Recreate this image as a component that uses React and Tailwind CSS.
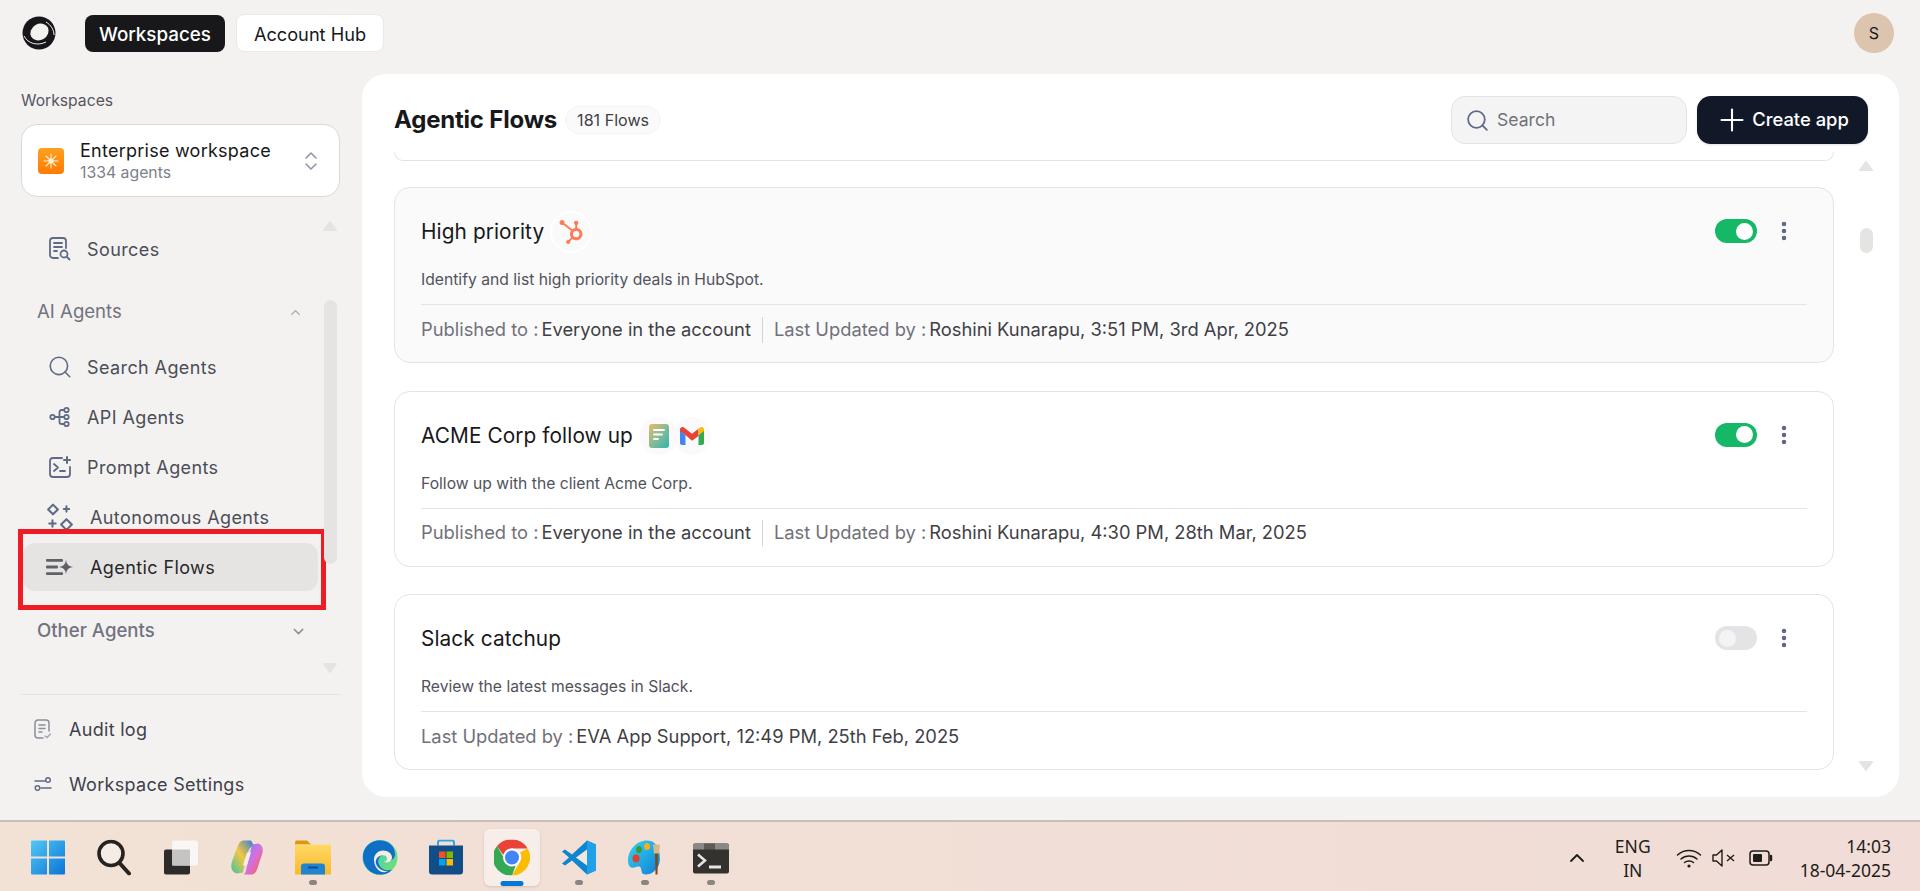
import { ChevronDown, ChevronUp, ChevronsUpDown, EllipsisVertical, Plus, Search } from "lucide-react";
import { SiHubspot } from "react-icons/si";

const inter = { fontFamily: "Inter, sans-serif" };

function Logo() {
  return (
    <svg width="34" height="34" viewBox="0 0 34 34">
      <circle cx="17" cy="17" r="16.5" fill="#17171a" />
      <ellipse cx="17.5" cy="16" rx="9.5" ry="8" fill="#f3f2f1" transform="rotate(-30 17.5 16)" />
      <path d="M2 20c4 8 14 10 22 6" fill="none" stroke="#f3f2f1" strokeWidth="1" />
      <path d="M24 6c5 3 8 8 8 13" fill="none" stroke="#f3f2f1" strokeWidth="1" />
    </svg>
  );
}

function SourcesIcon() {
  return (
    <svg className="shrink-0" width="22" height="24" viewBox="0 0 22 24" fill="none" stroke="#5f6b85" strokeWidth="1.8" strokeLinecap="round">
      <path d="M9 21H4a3 3 0 0 1-3-3V4a3 3 0 0 1 3-3h10a3 3 0 0 1 3 3v7" />
      <path d="M5 6h8M5 10h8M5 14h3" />
      <circle cx="15" cy="17" r="3.5" />
      <path d="m18 20 2.5 2.5" />
    </svg>
  );
}

function ApiIcon() {
  return (
    <svg className="shrink-0" width="22" height="22" viewBox="0 0 22 22" fill="none" stroke="#5f6b85" strokeWidth="1.8">
      <circle cx="3.5" cy="11" r="2.2" />
      <circle cx="17.5" cy="4" r="2.2" />
      <circle cx="17.5" cy="11" r="2.2" />
      <circle cx="17.5" cy="18" r="2.2" />
      <path d="M6 11h9M15 4h-2.5a2 2 0 0 0-2 2v10a2 2 0 0 0 2 2H15" />
    </svg>
  );
}

function PromptIcon() {
  return (
    <svg className="shrink-0" width="22" height="22" viewBox="0 0 22 22" fill="none" stroke="#5f6b85" strokeWidth="1.8" strokeLinecap="round" strokeLinejoin="round">
      <path d="M13 2H4a3 3 0 0 0-3 3v13a3 3 0 0 0 3 3h14a3 3 0 0 0 3-3v-7" />
      <path d="m5 8 4 3.5L5 15M11 15h5" />
      <path d="M18 1v6M15 4h6" strokeWidth="2" />
    </svg>
  );
}

function AutonomousIcon() {
  return (
    <svg className="shrink-0" width="28" height="28" viewBox="0 0 26 26" fill="none" stroke="#5f6b85" strokeWidth="1.9" strokeLinecap="round" strokeLinejoin="round">
      <path d="M6.5 1.500 11 6l-4.500 4.500L2 6zM19 15l5 5-5 5-5-5z" />
      <path d="M19 3v5M16.500 5.500h5M6 16v6M3 19h6" />
    </svg>
  );
}

function FlowsIcon() {
  return (
    <svg className="shrink-0" width="28" height="18" viewBox="0 0 28 18" fill="#5f6069">
      <rect x="0" y="1" width="17" height="2.800" rx="1" />
      <rect x="0" y="7.600" width="12" height="2.800" rx="1" />
      <rect x="0" y="14.200" width="17" height="2.800" rx="1" />
      <path d="M20 2c.7 4.600 2.600 6.300 7.500 7-4.900.7-6.800 2.400-7.500 7-.7-4.600-2.600-6.300-7.500-7 4.900-.7 6.800-2.400 7.500-7z" />
    </svg>
  );
}

function AuditIcon() {
  return (
    <svg width="18" height="20" viewBox="0 0 18 20" fill="none" stroke="#8b8e98" strokeWidth="1.500" strokeLinecap="round">
      <path d="M9 19H4a3 3 0 0 1-3-3V4a3 3 0 0 1 3-3h8a3 3 0 0 1 3 3v8" />
      <path d="M5 6h6M5 9.500h6M5 13h3" />
      <path d="m11 17 2 1.500 3.500-3.500" stroke="#a5a8b0" />
    </svg>
  );
}

function SettingsIcon() {
  return (
    <svg width="18" height="14" viewBox="0 0 18 14" fill="none" stroke="#5f6b85" strokeWidth="1.500" strokeLinecap="round">
      <path d="M1 4h10M7 11h10" />
      <circle cx="14" cy="3" r="2.300" />
      <circle cx="3.500" cy="11" r="2.300" />
    </svg>
  );
}

function NavItem({ icon, label, gap = "gap-[17px]", className = "" }) {
  return (
    <div className={`flex items-center pl-[27px] text-[18px] text-[#4b4d57] tracking-[0.4px] ${gap} ${className}`}>
      <span className="flex w-[20px] justify-center">{icon}</span>
      <span>{label}</span>
    </div>
  );
}

function FlowCard({ title, icons, description, published, updatedBy, active, on }) {
  return (
    <div className={`shrink-0 h-[176px] rounded-[16px] border border-[#e4e4e7] px-[26px] ${active ? "bg-[#fafafa]" : "bg-white"}`}>
      <div className="flex h-[79px] items-start pt-[23px]">
        <div className="flex h-[42px] items-center">
          <span className="text-[20.800px] text-[#18181b] tracking-[0.1px]">{title}</span>
          {icons}
        </div>
        <div className="ml-auto flex items-center pt-[8px]">
          <div className={`flex h-[24px] w-[42px] items-center rounded-full px-[4px] ${on ? "justify-end bg-[#14b866]" : "justify-start bg-[#e4e4e7]"}`}>
            <div className={`h-[17px] w-[17px] rounded-full ${on ? "bg-white" : "bg-[#f4f4f5]"}`} />
          </div>
          <EllipsisVertical size={24} color="#5f6480" strokeWidth={2.500} className="ml-[15px] mr-[11px]" />
        </div>
      </div>
      <p className="h-[26px] mb-[11px] text-[15.700px] leading-[26px] text-[#52525b]">{description}</p>
      <div className="flex h-[50px] items-center border-t border-[#e4e4e7] text-[18.330px]">
        {published && (
          <>
            <span className="text-[#71717a]">Published to :</span>
            <span className="ml-[3px] text-[#3f3f46]">{published}</span>
            <span className="mx-[11px] h-[26px] w-px bg-[#d4d4d8]" />
          </>
        )}
        <span className="text-[#71717a]">Last Updated by :</span>
        <span className="ml-[3px] text-[#3f3f46]">{updatedBy}</span>
      </div>
    </div>
  );
}

function HubspotBadge() {
  return (
    <span className="ml-[6px] flex h-[42px] w-[42px] items-center justify-center rounded-full border-2 border-white">
      <SiHubspot size={24} color="#ff7a59" />
    </span>
  );
}

function AcmeBadges() {
  return (
    <span className="ml-[7px] flex items-center">
      <span className="flex h-[38px] w-[38px] items-center justify-center rounded-full bg-[#fafafa]">
        <svg width="20" height="24" viewBox="0 0 20 24">
          <defs>
            <linearGradient id="doc" x1="0" y1="0" x2="1" y2="1">
              <stop offset="0" stopColor="#e8bb6d" />
              <stop offset="0.550" stopColor="#7dbb98" />
              <stop offset="1" stopColor="#2fb3ae" />
            </linearGradient>
          </defs>
          <rect width="20" height="24" rx="3" fill="url(#doc)" />
          <path d="M5 6h10M5 10.500h8M5 15h4" stroke="#fff" strokeWidth="1.800" strokeLinecap="round" />
        </svg>
      </span>
      <span className="-ml-[5px] flex h-[38px] w-[38px] items-center justify-center rounded-full bg-[#fafafa]">
        <svg width="24" height="18" viewBox="0 0 24 18">
          <path d="M0 3v13a2 2 0 0 0 2 2h3.500V8z" fill="#4285f4" />
          <path d="M24 3v13a2 2 0 0 1-2 2h-3.500V8z" fill="#34a853" />
          <path d="M5.500 8 0 4V2.500C0 .500 2.300-.600 3.900.600L5.500 1.800 12 6.700l6.500-4.900V9L12 13.800z" fill="#ea4335" />
          <path d="M18.500 1.800 20.100.600C21.700-.600 24 .500 24 2.500V4l-5.500 4z" fill="#fbbc04" />
        </svg>
      </span>
    </span>
  );
}

function ScrollArrow({ down }) {
  return (
    <svg width="16" height="12" viewBox="0 0 16 12" fill="#e4e4e3">
      <path d={down ? "M2 1h12a1 1 0 0 1 .800 1.600L8.800 10.500a1 1 0 0 1-1.600 0L1.200 2.600A1 1 0 0 1 2 1z" : "M2 11h12a1 1 0 0 0 .800-1.600L8.800 1.500a1 1 0 0 0-1.600 0L1.200 9.400A1 1 0 0 0 2 11z"} />
    </svg>
  );
}

function Sidebar() {
  return (
    <aside className="flex w-[362px] shrink-0 flex-col">
      <div className="pl-[21px] pr-[22px]">
        <div className="text-[15.700px] leading-[20px] text-[#55565f] h-[33px] mt-[17px]">Workspaces</div>
        <div className="flex h-[73px] items-center rounded-[16px] border border-[#d9d9dc] bg-white pl-[16px] pr-[16px]">
          <span className="flex h-[26px] w-[26px] items-center justify-center rounded-[4px] bg-gradient-to-b from-[#ffa01e] to-[#ff7a00]">
            <svg width="16" height="16" viewBox="0 0 16 16" stroke="#fff2cf" strokeWidth="1.100" strokeLinecap="round">
              <path d="M8 1v14M1 8h14M3 3l10 10M13 3 3 13" />
              <circle cx="8" cy="8" r="2.500" fill="#fff6dd" stroke="none" />
            </svg>
          </span>
          <div className="ml-[16px]">
            <div className="text-[18px] leading-[24px] text-[#18181b] tracking-[0.25px]">Enterprise workspace</div>
            <div className="text-[15.800px] leading-[20px] text-[#7d7f8b]">1334 agents</div>
          </div>
          <ChevronsUpDown size={24} color="#8f95a8" strokeWidth={1.600} className="ml-auto" />
        </div>
      </div>

      <div className="flex h-[454px] pl-[23px] pr-[22px] mt-[23px]">
        <div className="flex w-[295px] flex-col">
          <NavItem icon={<SourcesIcon />} label="Sources" className="h-[24px] mt-[17px]" />
          <div className="mt-[39px] flex h-[24px] items-center justify-between pl-[14px] pr-[15px] text-[18.600px] text-[#72737f]">
            AI Agents
            <ChevronUp size={15} color="#a1a1aa" />
          </div>
          <NavItem icon={<Search size={26} color="#5f6b85" strokeWidth={1.500} className="shrink-0" />} label="Search Agents" className="h-[24px] mt-[31px]" />
          <NavItem icon={<ApiIcon />} label="API Agents" className="h-[24px] mt-[26px]" />
          <NavItem icon={<PromptIcon />} label="Prompt Agents" className="h-[24px] mt-[26px]" />
          <NavItem icon={<AutonomousIcon />} label="Autonomous Agents" gap="gap-[20px]" className="h-[24px] mt-[26px]" />
          {/* red annotation box sits over the selected row */}
          <div className="relative mt-[14px]">
            <div className="flex h-[48px] items-center gap-[20px] rounded-[12px] bg-[#e5e4e3] pl-[27px] text-[18px] tracking-[0.4px] text-[#27272a]">
              <span className="flex w-[20px] justify-center"><FlowsIcon /></span>
              Agentic Flows
            </div>
            <div className="absolute -left-[5px] -right-[8px] -top-[14px] h-[81px] border-[5px] border-[#ee1c25]" />
          </div>
          <div className="mt-[28px] flex h-[24px] items-center justify-between pl-[14px] pr-[11px] text-[18.600px] font-medium text-[#72737f]">
            Other Agents
            <ChevronDown size={17} color="#8e8e96" />
          </div>
        </div>
        <div className="relative ml-[4px] w-[16px]">
          <div className="flex h-full flex-col items-center justify-between">
            <ScrollArrow />
            <ScrollArrow down />
          </div>
          <div className="absolute left-[1.500px] top-[80px] h-[264px] w-[13px] rounded-full bg-[#e5e4e3]" />
        </div>
      </div>

      <div className="mx-[21px] mt-[20px] border-t border-[#e4e4e3] pt-[22px] text-[18px] tracking-[0.3px] text-[#3f404a]">
        <div className="flex h-[24px] items-center gap-[17px] pl-[13px]"><AuditIcon />Audit log</div>
        <div className="mt-[31px] flex h-[24px] items-center gap-[17px] pl-[13px]"><SettingsIcon />Workspace Settings</div>
      </div>
    </aside>
  );
}

function Main() {
  return (
    <main className="flex h-[723px] w-[1537px] flex-col rounded-[24px] bg-white">
      <div className="flex h-[78px] shrink-0 items-center pl-[32px] pr-[31px] pt-[14px]">
        <h1 className="text-[24px] font-bold leading-none text-[#18181b] tracking-[-0.2px]">Agentic Flows</h1>
        <span className="ml-[8px] flex h-[28px] items-center rounded-full bg-[#fafafa] border border-[#f4f4f5] px-[11px] text-[16.100px] text-[#3f3f46]">181 Flows</span>
        <div className="ml-auto flex h-[48px] w-[236px] items-center gap-[7px] rounded-[14px] border border-[#e4e4e7] bg-[#f4f4f5] pl-[13px] text-[17.600px] text-[#71717a]">
          <Search size={25} color="#5f6b85" strokeWidth={1.700} />
          Search
        </div>
        <div className="ml-[10px] flex h-[48px] w-[171px] items-center justify-center gap-[2px] rounded-[14px] bg-[#111827] pr-[2px] text-[18.400px] font-medium text-white shadow-sm">
          <Plus size={36} color="#fff" strokeWidth={1.400} />
          Create app
        </div>
      </div>
      <div className="flex min-h-0 flex-1">
        <div className="ml-[32px] flex w-[1440px] flex-col gap-[27.500px] overflow-hidden">
          <div className="shrink-0 h-[9px] -mb-[1.500px] rounded-b-[16px] border-x border-b border-[#e4e4e7]" />
          <FlowCard
            active
            on
            title="High priority"
            icons={<HubspotBadge />}
            description="Identify and list high priority deals in HubSpot."
            published="Everyone in the account"
            updatedBy="Roshini Kunarapu, 3:51 PM, 3rd Apr, 2025"
          />
          <FlowCard
            on
            title="ACME Corp follow up"
            icons={<AcmeBadges />}
            description="Follow up with the client Acme Corp."
            published="Everyone in the account"
            updatedBy="Roshini Kunarapu, 4:30 PM, 28th Mar, 2025"
          />
          <FlowCard
            title="Slack catchup"
            description="Review the latest messages in Slack."
            updatedBy="EVA App Support, 12:49 PM, 25th Feb, 2025"
          />
        </div>
        <div className="relative ml-[24px] h-[620px] w-[16px]">
          <div className="flex h-full flex-col items-center justify-between pt-[8px]">
            <ScrollArrow />
            <ScrollArrow down />
          </div>
          <div className="absolute left-[1.500px] top-[76px] h-[25px] w-[13px] rounded-full bg-[#e5e4e3]" />
        </div>
      </div>
    </main>
  );
}

function StartIcon() {
  return (
    <svg width="36" height="36" viewBox="0 0 36 36">
      <defs>
        <linearGradient id="win" x1="0" y1="0" x2="1" y2="1">
          <stop offset="0" stopColor="#52c8f7" />
          <stop offset="1" stopColor="#0a74d6" />
        </linearGradient>
      </defs>
      <path d="M1 2a1 1 0 0 1 1-1h15v16H1zM19 1h15a1 1 0 0 1 1 1v15H19zM1 19h16v16H2a1 1 0 0 1-1-1zM19 19h16v15a1 1 0 0 1-1 1H19z" fill="url(#win)" />
    </svg>
  );
}

function SearchIcon() {
  return (
    <svg width="36" height="36" viewBox="0 0 36 36" fill="none" stroke="#26221f" strokeLinecap="round">
      <circle cx="15" cy="14" r="12" strokeWidth="3.600" fill="#f5ece6" />
      <path d="m24 24 9 10" strokeWidth="4" />
    </svg>
  );
}

function TaskViewIcon() {
  return (
    <svg width="36" height="36" viewBox="0 0 36 36">
      <rect x="1" y="10" width="26" height="25" rx="2" fill="#2e2c2b" />
      <rect x="9" y="1" width="26" height="25" rx="2" fill="#f8f7f6" />
      <rect x="9" y="10" width="18" height="16" fill="#c6c4c3" />
    </svg>
  );
}

function CopilotIcon() {
  return (
    <svg width="36" height="36" viewBox="0 0 36 36">
      <defs>
        <linearGradient id="cp1" x1="0" y1="1" x2="1" y2="0">
          <stop offset="0" stopColor="#3ec3a3" />
          <stop offset="0.500" stopColor="#f4c73f" />
          <stop offset="1" stopColor="#2a7de1" />
        </linearGradient>
        <linearGradient id="cp2" x1="0" y1="0" x2="1" y2="1">
          <stop offset="0" stopColor="#6a8cf2" />
          <stop offset="0.500" stopColor="#d66fe0" />
          <stop offset="1" stopColor="#f4643c" />
        </linearGradient>
      </defs>
      <path d="M22 1h-7c-3 0-5 2-6 5L3 22c-2 6 0 11 5 12l6-1 5-20c1-4 3-6 6-7z" fill="url(#cp1)" />
      <path d="M15 35h7c3 0 5-2 6-5l5-15c2-6 0-10-4-11l-6 1-5 21c-1 4-1 7-3 9z" fill="url(#cp2)" />
      <path d="M18 13h4l-4 13h-4z" fill="#f7eee8" />
    </svg>
  );
}

function ExplorerIcon() {
  return (
    <svg width="36" height="36" viewBox="0 0 36 36">
      <defs>
        <linearGradient id="fol" x1="0" y1="0" x2="0" y2="1">
          <stop offset="0" stopColor="#ffd866" />
          <stop offset="1" stopColor="#f9b92b" />
        </linearGradient>
      </defs>
      <path d="M0 3a2 2 0 0 1 2-2h10l4 4H0z" fill="#d99a0f" />
      <rect x="0" y="5" width="36" height="30" rx="1" fill="url(#fol)" />
      <path d="M6 35V27a3 3 0 0 1 3-3h18a3 3 0 0 1 3 3v8z" fill="#1f85d0" />
      <rect x="13" y="27" width="10" height="2" fill="#0f4f8f" />
    </svg>
  );
}

function EdgeIcon() {
  return (
    <svg width="36" height="36" viewBox="0 0 36 36">
      <defs>
        <linearGradient id="edg" x1="0" y1="0" x2="1" y2="1">
          <stop offset="0" stopColor="#2fc4d8" />
          <stop offset="1" stopColor="#7be36a" />
        </linearGradient>
      </defs>
      <circle cx="18" cy="18" r="17.500" fill="url(#edg)" />
      <path d="M1 17C1 27 8 35 18 35c5 0 9-1 12-5-5 2-11 0-13-5-2-4 0-8 4-10 3-1 6 0 6 3 0 2-2 3-2 3 4 1 8-2 8-6C33 6 26 1 18 1 8 1 1 8 1 17z" fill="#0f6fc4" />
      <path d="M12 20c0-5 4-9 9-9s9 3 9 7c0 3-3 5-6 5-1 0-2-1-2-1s3 0 3-3c0-3-3-4-6-3-4 1-6 5-5 8 1 4 6 8 12 8-8 3-14-4-14-12z" fill="#f5ece6" />
    </svg>
  );
}

function StoreIcon() {
  return (
    <svg width="36" height="36" viewBox="0 0 36 36">
      <path d="M10 6V3a2 2 0 0 1 2-2h12a2 2 0 0 1 2 2v3" fill="none" stroke="#2fa4e8" strokeWidth="2" />
      <path d="M1 6h34v26a3 3 0 0 1-3 3H4a3 3 0 0 1-3-3z" fill="#114d86" />
      <rect x="11" y="12" width="6.500" height="6.500" fill="#f25022" />
      <rect x="18.500" y="12" width="6.500" height="6.500" fill="#7fba00" />
      <rect x="11" y="19.500" width="6.500" height="6.500" fill="#00a4ef" />
      <rect x="18.500" y="19.500" width="6.500" height="6.500" fill="#ffb900" />
    </svg>
  );
}

function ChromeIcon() {
  return (
    <svg width="36" height="36" viewBox="0 0 36 36">
      <path d="M18 0a18 18 0 0 1 15.600 9H18a9 9 0 0 0-8.700 6.600L3 6.500A18 18 0 0 1 18 0z" fill="#ea4335" />
      <path d="M33.600 9A18 18 0 0 1 18 36l7.800-13.500A9 9 0 0 0 26 13z" fill="#fbbc04" />
      <path d="M18 36A18 18 0 0 1 3 6.500l7.800 13.500a9 9 0 0 0 11 5.500z" fill="#34a853" />
      <circle cx="18" cy="18" r="9" fill="#fff" />
      <circle cx="18" cy="18" r="7" fill="#4285f4" />
    </svg>
  );
}

function VscodeIcon() {
  return (
    <svg width="36" height="36" viewBox="0 0 36 36">
      <path d="M26 1 35 5v26l-9 4-15-14-7 5-3-2 7-6-7-6 3-2 7 5z" fill="#0c86d0" />
      <path d="M26 1 35 5v26l-9 4zM26 10 15 18l11 8z" fill="#1fa0e8" />
      <path d="M26 10 15 18l11 8z" fill="#f3e6de" />
    </svg>
  );
}

function PaletteIcon() {
  return (
    <svg width="36" height="36" viewBox="0 0 36 36">
      <defs>
        <linearGradient id="pal" x1="0" y1="0" x2="1" y2="1">
          <stop offset="0" stopColor="#38d3f2" />
          <stop offset="1" stopColor="#0f7fd6" />
        </linearGradient>
      </defs>
      <path d="M20 1C9 1 1 11 1 21c0 6 3 8 6 7 4-1 6-2 7 1s0 6 5 6c6 0 10-4 13-10 2-4 2-24-12-24z" fill="url(#pal)" />
      <ellipse cx="9" cy="19" rx="3.500" ry="4" fill="#d9452c" />
      <ellipse cx="12" cy="10" rx="3" ry="3.500" fill="#3c9a38" />
      <ellipse cx="20" cy="7" rx="3" ry="3.500" fill="#f2b01e" />
      <path d="M28 13h3l-.5 22h-2z" fill="#7c4a1e" />
      <path d="M26 5h7l-1 9h-5z" fill="#d7b98a" />
    </svg>
  );
}

function TerminalIcon() {
  return (
    <svg width="36" height="36" viewBox="0 0 36 36">
      <rect x="0" y="4" width="36" height="30" rx="2" fill="#34322f" />
      <path d="M0 6a2 2 0 0 1 2-2h9v6H0zM22 4h12a2 2 0 0 1 2 2v4H22z" fill="#8b8986" />
      <path d="M11 4h11v6H11z" fill="#5d5b58" />
      <path d="m5 15 7 6-7 6" fill="none" stroke="#e8e6e3" strokeWidth="2.500" />
      <rect x="16" y="26" width="12" height="3" fill="#e8e6e3" />
    </svg>
  );
}

function Tile({ children, dot, active }) {
  return (
    <div className={`relative flex h-[57px] w-[66.300px] items-center justify-center ${active ? "before:absolute before:inset-y-0 before:left-[5px] before:right-[5px] before:rounded-[6px] before:bg-[#f7eee9] before:shadow-sm" : ""}`}>
      <span className="relative flex -translate-y-[0.500px]">{children}</span>
      {dot && <span className="absolute bottom-[1px] left-1/2 h-[5px] w-[8px] -translate-x-1/2 rounded-full bg-[#8c8480]" />}
      {active && <span className="absolute bottom-[0px] left-1/2 h-[5px] w-[23px] -translate-x-1/2 rounded-full bg-[#0078d4]" />}
    </div>
  );
}

function Taskbar() {
  const tray = { fontFamily: '"Noto Sans", "Open Sans", sans-serif' };
  return (
    <div className="flex h-[71px] items-center border-t-[2px] border-[#c6bfb9] bg-gradient-to-r from-[#f2e1d5] to-[#f1dcd7] pl-[15px] pt-[2px]" style={tray}>
      <Tile><StartIcon /></Tile>
      <Tile><SearchIcon /></Tile>
      <Tile><TaskViewIcon /></Tile>
      <Tile><CopilotIcon /></Tile>
      <Tile dot><ExplorerIcon /></Tile>
      <Tile><EdgeIcon /></Tile>
      <Tile><StoreIcon /></Tile>
      <Tile active><ChromeIcon /></Tile>
      <Tile dot><VscodeIcon /></Tile>
      <Tile dot><PaletteIcon /></Tile>
      <Tile dot><TerminalIcon /></Tile>

      <div className="ml-auto flex items-center pr-[29px] text-[17.500px] leading-[24px] text-[#1f1c1a]">
        <ChevronUp size={24} color="#1f1c1a" strokeWidth={1.800} />
        <div className="ml-[26px] text-center">
          <div>ENG</div>
          <div>IN</div>
        </div>
        <svg className="ml-[25px]" width="26" height="20" viewBox="0 0 26 20" fill="none" stroke="#1f1c1a" strokeWidth="1.500" strokeLinecap="round">
          <path d="M1.500 7C8 1 18 1 24.500 7M5 11c4.500-4 11.500-4 16 0M8.500 14.500c2.500-2 6.500-2 9 0" />
          <circle cx="13" cy="18" r="1.600" fill="#1f1c1a" stroke="none" />
        </svg>
        <svg className="ml-[10px]" width="24" height="18" viewBox="0 0 24 18" fill="none" stroke="#1f1c1a" strokeWidth="1.400" strokeLinejoin="round">
          <path d="M1 6v6h3.500L10 17V1L4.500 6z" />
          <path d="m15 6 7 6M22 6l-7 6" />
        </svg>
        <svg className="ml-[13px]" width="24" height="16" viewBox="0 0 24 16" fill="none" stroke="#1f1c1a" strokeWidth="1.500">
          <rect x="1" y="1" width="19" height="14" rx="3" />
          <rect x="4" y="4" width="9" height="8" rx="1" fill="#1f1c1a" stroke="none" />
          <path d="M22 6v4" strokeWidth="2.400" strokeLinecap="round" />
        </svg>
        <div className="ml-[27px] text-right">
          <div>14:03</div>
          <div>18-04-2025</div>
        </div>
      </div>
    </div>
  );
}

export default function App() {
  return (
    <div className="flex h-[891px] w-[1920px] flex-col overflow-hidden bg-[#f3f2f1]" style={inter}>
      <header className="flex h-[74px] shrink-0 items-start pl-[22px] pr-[26px] pt-[15px]">
        <span className="mt-[1px]"><Logo /></span>
        <div className="ml-[29px] flex h-[37px] w-[140px] items-center justify-center rounded-[8px] bg-[#18181b] pt-[3px] text-[18.800px] font-medium text-white">Workspaces</div>
        <div className="ml-[11px] -mt-[1px] flex h-[38px] w-[148px] items-center justify-center rounded-[8px] border border-[#e9e9ea] bg-white pt-[3px] text-[18.200px] text-[#18181b]">Account Hub</div>
        <div className="ml-auto -mt-[2px] flex h-[40px] w-[40px] items-center justify-center rounded-full bg-[#dcc4ae] text-[16px] text-[#18181b]">S</div>
      </header>
      <div className="flex h-[746px] shrink-0">
        <Sidebar />
        <Main />
      </div>
      <Taskbar />
    </div>
  );
}
